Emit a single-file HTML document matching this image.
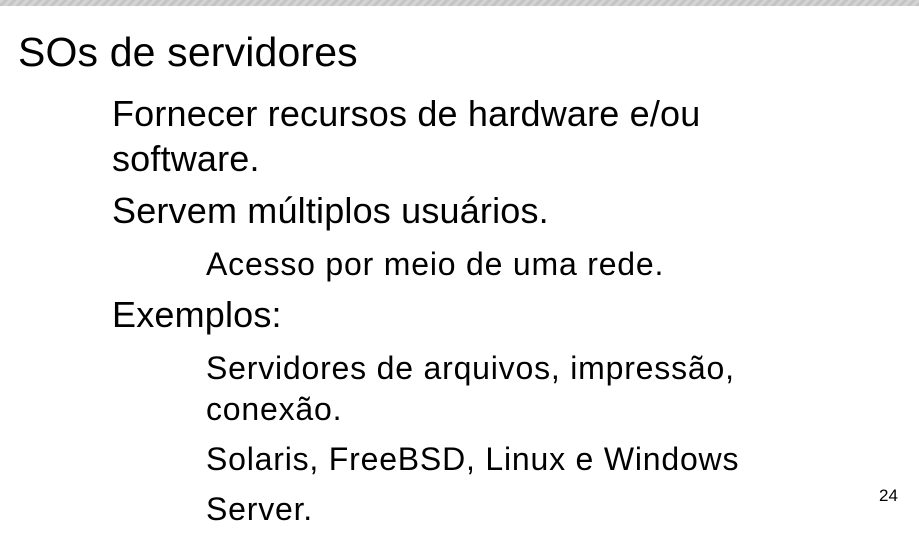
<!DOCTYPE html>
<html><head><meta charset="utf-8"><style>
body{margin:0;width:919px;height:547px;background:#fff;overflow:hidden;position:relative;font-family:"Liberation Sans",Arial,sans-serif;color:#000}
.top{position:absolute;left:0;top:0;width:919px;height:6px;background:repeating-linear-gradient(135deg,#d4d4d4 0 3px,#c4c4c4 3px 6px)}
.t{position:absolute;white-space:nowrap;line-height:1}
.h{font-size:41px;left:18px;letter-spacing:0.15px}
.a{font-size:36px;left:112px;letter-spacing:0.18px}
.b{font-size:32px;left:206px;letter-spacing:0.8px}
</style></head><body>
<div class="top"></div>
<div class="t h" style="top:32px">SOs de servidores</div>
<div class="t a" style="top:96px">Fornecer recursos de hardware e/ou</div>
<div class="t a" style="top:141px">software.</div>
<div class="t a" style="top:193px">Servem múltiplos usuários.</div>
<div class="t b" style="top:248px">Acesso por meio de uma rede.</div>
<div class="t a" style="top:297px">Exemplos:</div>
<div class="t b" style="top:352px">Servidores de arquivos, impressão,</div>
<div class="t b" style="top:393px">conexão.</div>
<div class="t b" style="top:443px">Solaris, FreeBSD, Linux e Windows</div>
<div class="t b" style="top:493px">Server.</div>
<div class="t" style="font-size:17px;left:879px;top:487px">24</div>
</body></html>
